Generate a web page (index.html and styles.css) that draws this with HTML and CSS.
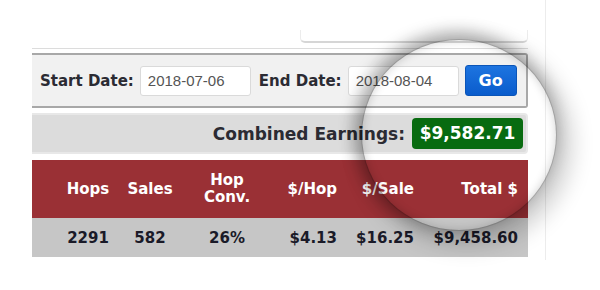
FILE: index.html
```html
<!DOCTYPE html>
<html lang="en">
<head>
    <meta charset="UTF-8">
    <meta name="viewport" content="width=device-width, initial-scale=1.0">
    <link rel="stylesheet" href="styles.css">
    <title>Earnings Report</title>
</head>
<body>
  <div class="frame">
    <div class="report">
      <div class="topTab"></div>
      <div class="rule"></div>

      <div class="filterBox">
        <label class="fieldLabel">Start Date:</label>
        <input type="text" class="dateInput" value="2018-07-06">
        <label class="fieldLabel endLabel">End Date:</label>
        <input type="text" class="dateInput" value="2018-08-04">
        <button class="goBtn">Go</button>
      </div>

      <div class="earningsBar">
        <span class="earningsLabel">Combined Earnings:</span>
        <span class="earningsTotal">$9,582.71</span>
      </div>

      <div class="stats">
        <div class="statsRow statsHead">
          <div class="center">Hops</div>
          <div class="center">Sales</div>
          <div class="center">Hop<br>Conv.</div>
          <div class="right">$/Hop</div>
          <div class="right">$/Sale</div>
          <div class="right">Total $</div>
        </div>
        <div class="statsRow statsData">
          <div class="center">2291</div>
          <div class="center">582</div>
          <div class="center">26%</div>
          <div class="right">$4.13</div>
          <div class="right">$16.25</div>
          <div class="right">$9,458.60</div>
        </div>
      </div>
    </div>
  </div>

  <div class="lens"></div>
</body>
</html>
```

FILE: styles.css
```css
body {
  margin: 0;
  background: #fff;
  font-family: "DejaVu Sans", Verdana, sans-serif;
  color: #1d1d29;
  width: 600px;
  height: 290px;
  overflow: hidden;
  position: relative;
}

.frame {
  margin-left: 32px;
  width: 496px;
  padding: 30px 17px 3px 0;
  border-right: 1px solid #ececec;
}

.report {
  width: 496px;
}

.topTab {
  margin-left: 268px;
  height: 11px;
  border: 1px solid #ececec;
  border-top: none;
  border-bottom: 2px solid #d6d6d6;
  border-radius: 0 0 5px 5px;
}

.rule {
  margin-top: 5px;
  height: 1px;
  background: #dcdcdc;
}

.filterBox {
  margin-top: 4px;
  height: 51px;
  background: #f1f1f1;
  border: 2px solid #a8a8a8;
  border-left: none;
  border-radius: 0 3px 3px 0;
  display: flex;
  align-items: center;
  padding-left: 8px;
}

.fieldLabel {
  font-weight: bold;
  font-size: 15px;
  color: #2b2b33;
  margin-right: 6px;
}

.endLabel {
  margin-left: 8px;
}

.dateInput {
  width: 111px;
  height: 30px;
  box-sizing: border-box;
  border: 1px solid #dadada;
  border-radius: 3px;
  background: #fff;
  font-family: "Liberation Sans", Arial, sans-serif;
  font-size: 15px;
  color: #555;
  padding: 0 0 0 7px;
}

.goBtn {
  margin-left: 6px;
  width: 52px;
  height: 31px;
  border: 1px solid #0b55b8;
  border-radius: 3px;
  background: linear-gradient(#1d74e0, #0a5ccc);
  color: #fff;
  font-family: "DejaVu Sans", Verdana, sans-serif;
  font-weight: bold;
  font-size: 16px;
  padding: 0;
}

.earningsBar {
  margin-top: 5px;
  height: 37px;
  background: #dcdcdc;
  border: 2px solid #e8e8e8;
  border-left: none;
  border-radius: 0 4px 4px 0;
  display: flex;
  align-items: center;
  justify-content: flex-end;
  padding-right: 3px;
}

.earningsLabel {
  font-weight: bold;
  font-size: 17px;
  color: #2b2b33;
  margin-right: 7px;
}

.earningsTotal {
  background: #086b10;
  color: #fff;
  font-weight: bold;
  font-size: 17px;
  border-radius: 4px;
  width: 111px;
  height: 31px;
  line-height: 31px;
  text-align: center;
}

.stats {
  margin-top: 6px;
}

.statsRow {
  display: grid;
  grid-template-columns: 64px 60px 94px 63px 77px 104px;
  padding: 0 10px 0 24px;
  align-items: center;
  font-weight: bold;
  font-size: 15px;
}

.statsHead {
  height: 58px;
  background: #9a3035;
  color: #fff;
  line-height: 17px;
}

.statsData {
  height: 39px;
  background: #c6c6c6;
  color: #1a1a28;
}

.center { text-align: center; }
.right { text-align: right; }

.lens {
  position: absolute;
  left: 362px;
  top: 40px;
  width: 194px;
  height: 190px;
  border-radius: 50%;
  box-shadow: 0 0 0 1px rgba(0,0,0,.12), -4px -4px 16px 4px rgba(0,0,0,.28), 8px 8px 22px 8px rgba(0,0,0,.18), inset 0 0 10px rgba(0,0,0,.18);
  pointer-events: none;
}
```
